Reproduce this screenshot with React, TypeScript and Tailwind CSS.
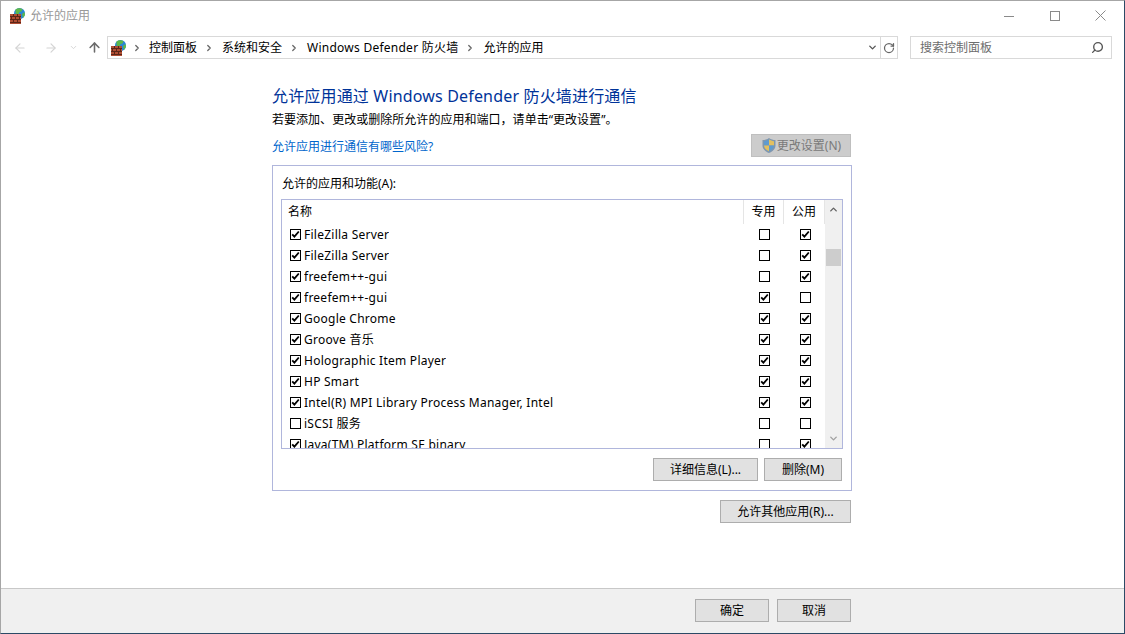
import { ArrowLeft, ArrowRight, ArrowUp, ChevronDown, ChevronRight, ChevronUp, RotateCw, Search } from 'lucide-react'

const FONT = 'font-["Noto_Sans","Noto_Sans_CJK_SC",sans-serif]'

/** [name, enabled, private, public] */
const apps: [string, boolean, boolean, boolean][] = [
  ['FileZilla Server', true, false, true],
  ['FileZilla Server', true, false, true],
  ['freefem++-gui', true, false, true],
  ['freefem++-gui', true, true, false],
  ['Google Chrome', true, true, true],
  ['Groove 音乐', true, true, true],
  ['Holographic Item Player', true, true, true],
  ['HP Smart', true, true, true],
  ['Intel(R) MPI Library Process Manager, Intel', true, true, true],
  ['iSCSI 服务', false, false, false],
  ['Java(TM) Platform SE binary', true, false, true],
]

function FirewallIcon({ size = 16 }: { size?: number }) {
  return (
    <svg width={size} height={size} viewBox="0 0 16 16" className="shrink-0">
      <circle cx="9.500" cy="5.500" r="5.500" fill="#2a86d6" />
      <path d="M5.500 1.500C7.500-.2 10.500-.2 12.500 1l-1 2.500-2 .5-1 2.500-3-1z" fill="#5cb84a" />
      <path d="M12 6l2.500-2 .5 3-2 3z" fill="#5cb84a" />
      <rect x="0" y="6" width="11" height="10" fill="#b04d33" />
      <path d="M0 8.500h11M0 11.500h11M0 14.500h11M3.500 6v2.500M7.500 6v2.500M1.500 8.500v3M5.500 8.500v3M9.500 8.500v3M3.500 11.500v3M7.500 11.500v3" stroke="#5c2618" strokeWidth="1" fill="none" />
    </svg>
  )
}

function ShieldIcon() {
  return (
    <svg width="16" height="17" viewBox="0 0 16 17" className="shrink-0">
      <path d="M8 1c2 1.400 4 2 6.500 2v5.500c0 3.700-3 6-6.500 7.500-3.500-1.500-6.500-3.800-6.500-7.500V3C4 3 6 2.400 8 1z" fill="#7f97b0" />
      <path d="M8 2.500V8.500H3V4.200C5 4 6.500 3.400 8 2.500z" fill="#5f9bd0" />
      <path d="M8 2.500c1.500.9 3 1.500 5 1.700v4.300H8z" fill="#e3c060" />
      <path d="M3 8.500h5v5.800C5.400 13.100 3.200 11.300 3 8.500z" fill="#e3c060" />
      <path d="M8 8.500h5c-.2 2.800-2.400 4.600-5 5.800z" fill="#5f9bd0" />
    </svg>
  )
}

function Check({ on }: { on: boolean }) {
  return (
    <span className="grid h-[11px] w-[11px] shrink-0 place-items-center border border-black bg-white">
      {on && (
        <svg width="9" height="9" viewBox="0 0 9 9">
          <path d="M1.200 4.300l2.200 2.400L7.800 1.500" stroke="#000" strokeWidth="1.800" fill="none" />
        </svg>
      )}
    </span>
  )
}

function Button({ label, className = '' }: { label: string; className?: string }) {
  return (
    <button className={`flex h-[23px] items-center justify-center border border-[#adadad] bg-[#e1e1e1] text-xs text-black ${className}`}>
      {label}
    </button>
  )
}

export default function App() {
  return (
    <div className={`${FONT} flex h-[634px] w-[1125px] flex-col overflow-hidden border border-t-[#a6a6a6] border-r-[#2b4a66] border-b-[#2b4a66] border-l-[#a6a6a6] bg-white text-xs text-black`}>
      {/* title bar */}
      <div className="flex h-[29px] shrink-0 items-center">
        <div className="ml-[9px] flex items-center gap-[4px]">
          <FirewallIcon />
          <span className="text-xs text-[#999999]">允许的应用</span>
        </div>
        <div className="ml-auto mr-px flex items-center">
          <div className="grid h-[29px] w-[46px] place-items-center">
            <span className="mt-px h-px w-[10px] bg-[#8a8a8a]" />
          </div>
          <div className="grid h-[29px] w-[45px] place-items-center">
            <span className="h-[10px] w-[10px] border border-[#8a8a8a]" />
          </div>
          <div className="grid h-[29px] w-[46px] place-items-center">
            <svg width="11" height="11" viewBox="0 0 11 11">
              <path d="M.5.5l10 10M10.500.5l-10 10" stroke="#8a8a8a" fill="none" />
            </svg>
          </div>
        </div>
      </div>

      {/* address bar */}
      <div className="mt-[6px] flex h-[23px] shrink-0 items-center">
        <div className="ml-[12px] flex w-[94px] items-center">
          <ArrowLeft size={14} strokeWidth={2} className="text-[#d4d4d4]" />
          <ArrowRight size={14} strokeWidth={2} className="ml-[17px] text-[#d4d4d4]" />
          <ChevronDown size={9} strokeWidth={2.500} className="ml-[11px] text-[#d4d4d4]" />
          <ArrowUp size={15} strokeWidth={2.500} className="ml-[9px] text-[#6b6b6b]" />
        </div>
        <div className="flex h-[23px] w-[791px] items-center border border-[#d9d9d9]">
          <div className="ml-[3px]">
            <FirewallIcon />
          </div>
          <ChevronRight size={10} strokeWidth={3} className="ml-[5px] text-[#666666]" />
          <span className="ml-[7px]">控制面板</span>
          <ChevronRight size={10} strokeWidth={3} className="ml-[7px] text-[#666666]" />
          <span className="ml-[8px]">系统和安全</span>
          <ChevronRight size={10} strokeWidth={3} className="ml-[7px] text-[#666666]" />
          <span className="ml-[8px] tracking-[0.25px]">Windows Defender 防火墙</span>
          <ChevronRight size={10} strokeWidth={3} className="ml-[7px] text-[#666666]" />
          <span className="ml-[8px]">允许的应用</span>
          <ChevronDown size={11} strokeWidth={3} className="ml-auto mr-[2px] text-[#555555]" />
          <div className="grid h-[21px] w-[17px] place-items-center border-l border-[#d9d9d9]">
            <RotateCw size={12} strokeWidth={2.500} className="text-[#666666]" />
          </div>
        </div>
        <div className="ml-[12px] flex h-[23px] w-[202px] items-center border border-[#d9d9d9] pl-[9px] pr-[7px] text-[#6d6d6d]">
          <span>搜索控制面板</span>
          <Search size={13} strokeWidth={2.500} className="ml-auto -scale-x-100 text-[#555555]" />
        </div>
      </div>

      {/* main content */}
      <div className="ml-[271px] flex w-[580px] flex-1 flex-col">
        <h1 className="mt-[25px] h-[24px] text-[16px] leading-[24px] tracking-[0.17px] text-[#003399]">允许应用通过 Windows Defender 防火墙进行通信</h1>
        <p className="mt-[3px] h-[17px] leading-[17px] tracking-[0.03px]">若要添加、更改或删除所允许的应用和端口，请单击“更改设置”。</p>
        <div className="mt-[6px] flex h-[23px] items-center justify-between pr-px">
          <a className="pt-[2px] text-[#0066cc]">允许应用进行通信有哪些风险?</a>
          <button className="flex h-[23px] w-[100px] items-center justify-center border border-[#bfbfbf] bg-[#cccccc] text-[#7a7a7a]">
            <ShieldIcon />
            <span>更改设置(N)</span>
          </button>
        </div>

        <div className="mt-[8px] flex h-[326px] flex-col border border-[#b0b6dc] px-[8px]">
          <div className="mt-[9px] h-[17px] pl-px leading-[17px]">允许的应用和功能(A):</div>
          <div className="mt-[7px] flex h-[250px] overflow-hidden border border-[#b0b6dc]">
            <div className="min-w-0 flex-1">
              <div className="flex h-[24px] items-center">
                <span className="flex-1 pl-[6px]">名称</span>
                <span className="flex h-[24px] w-[41px] items-center justify-center border-x border-[#e5e5e5]">专用</span>
                <span className="flex h-[24px] w-[41px] items-center justify-center border-r border-[#e5e5e5]">公用</span>
              </div>
              {apps.map(([name, on, priv, pub], i) => (
                <div key={i} className="flex h-[21px] items-center">
                  <div className="flex min-w-0 flex-1 items-center gap-[3px] pl-[8px]">
                    <Check on={on} />
                    <span className="truncate tracking-[0.25px]">{name}</span>
                  </div>
                  <div className="flex w-[41px] justify-center pl-[2px]">
                    <Check on={priv} />
                  </div>
                  <div className="flex w-[41px] justify-center pl-[2px]">
                    <Check on={pub} />
                  </div>
                </div>
              ))}
            </div>
            <div className="flex w-[17px] shrink-0 flex-col items-center bg-[#f0f0f0]">
              <ChevronUp size={11} strokeWidth={3} className="mt-[4px] text-[#606060]" />
              <div className="mt-[34px] h-[17px] w-[15px] bg-[#cdcdcd]" />
              <ChevronDown size={11} strokeWidth={3} className="mb-[4px] mt-auto text-[#a0a0a0]" />
            </div>
          </div>
          <div className="mt-[9px] flex justify-end gap-[6px] pr-px">
            <Button label="详细信息(L)..." className="w-[105px]" />
            <Button label="删除(M)" className="w-[78px]" />
          </div>
        </div>

        <div className="mt-[9px] flex justify-end pr-px">
          <Button label="允许其他应用(R)..." className="w-[131px]" />
        </div>
      </div>

      {/* footer */}
      <div className="flex h-[45px] shrink-0 justify-end gap-[8px] border-t border-[#c8c8c8] bg-[#f0f0f0] pr-[273px] pt-[10px]">
        <Button label="确定" className="w-[74px]" />
        <Button label="取消" className="w-[74px]" />
      </div>
    </div>
  )
}
